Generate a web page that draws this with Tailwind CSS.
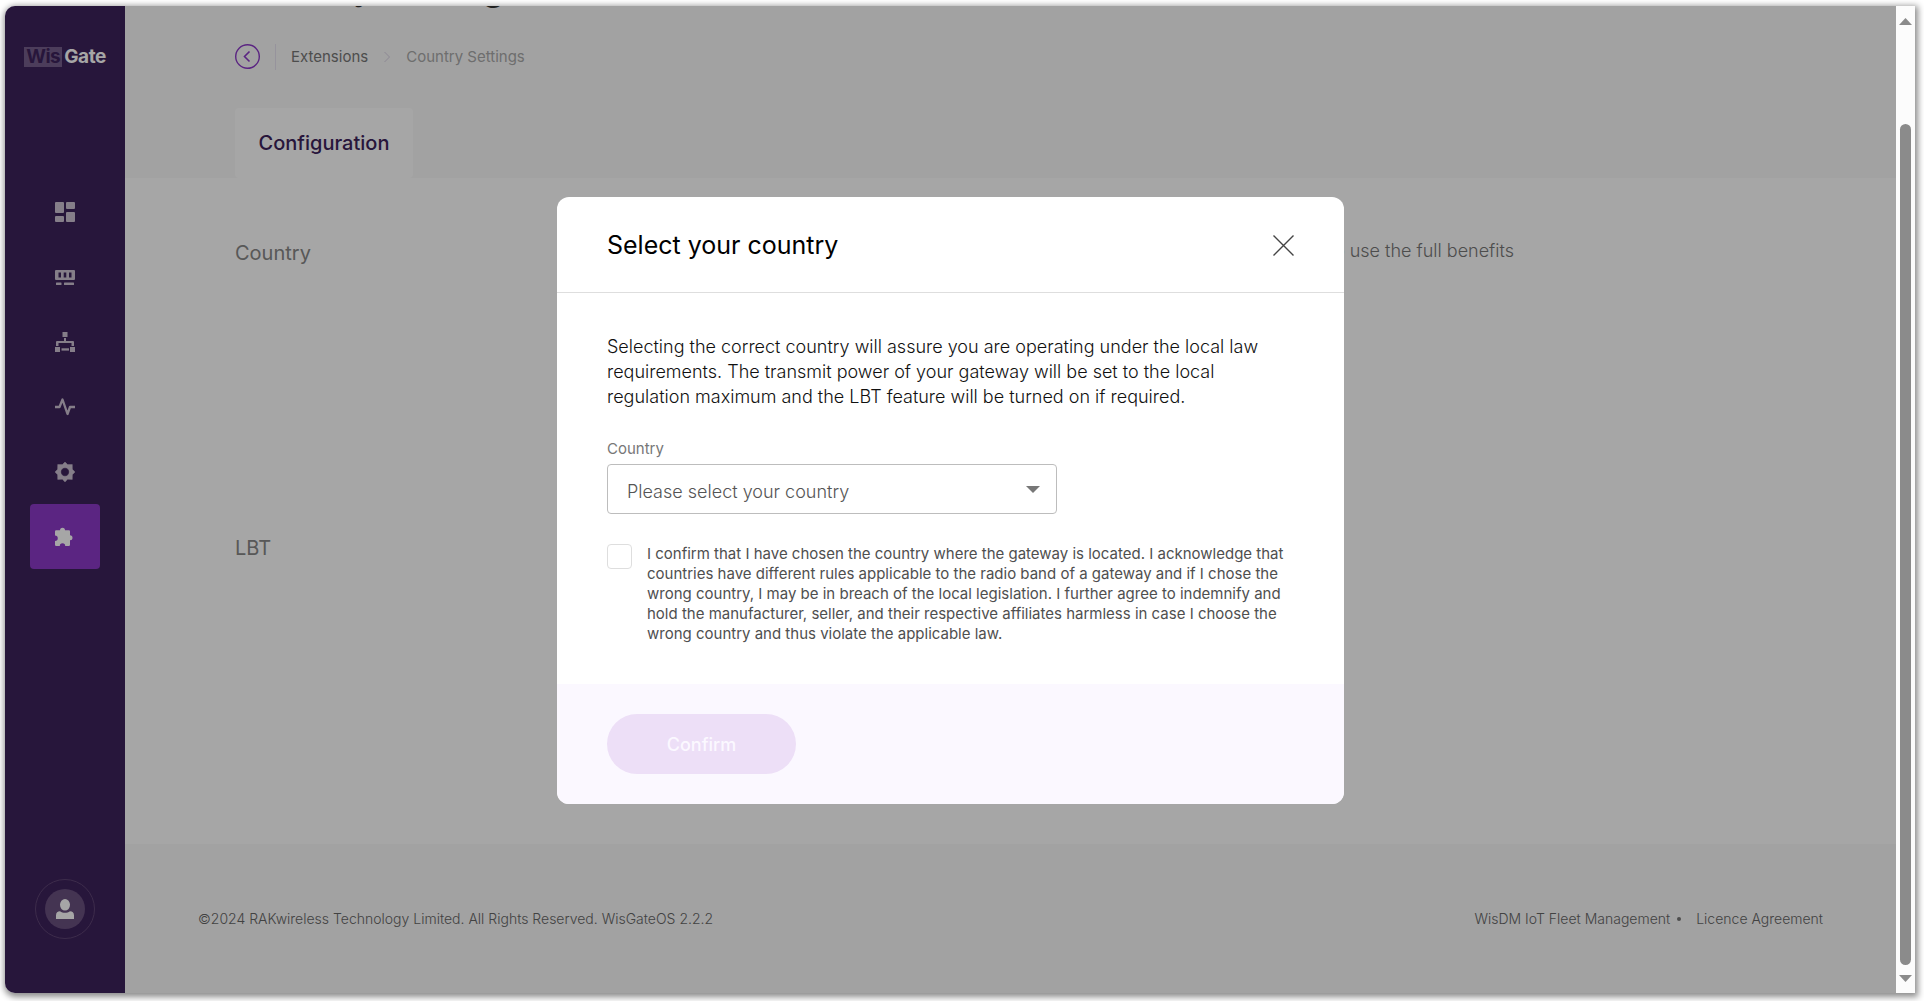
<!DOCTYPE html>
<html lang="en">
<head>
<meta charset="utf-8">
<title>WisGate - Country Settings</title>
<script src="https://cdn.jsdelivr.net/npm/@tailwindcss/browser@4"></script>
</head>
<body class="h-screen bg-white pt-[6px] pr-[9px] pb-[8px] pl-[5px] font-['Inter',sans-serif] overflow-hidden">
<div class="relative flex h-full overflow-hidden rounded-[10px] rounded-r-none bg-[#fcfcfc] shadow-[1px_2px_6px_2px_rgba(0,0,0,0.45)]">

  <!-- Sidebar -->
  <aside class="flex w-[120px] shrink-0 flex-col items-center bg-[#3d225b] pb-[54px]">
    <a href="#" class="mt-[41px] flex h-5 items-center gap-[2px] text-[19px] font-bold leading-5 tracking-tight">
      <span class="bg-[#755f8c] px-[2px] text-[#3d225b]">Wis</span><span class="text-white">Gate</span>
    </a>
    <nav class="mt-[112px] flex flex-col text-[#cdc2d3]">
      <a href="#" aria-label="Dashboard" class="flex h-[65px] w-[70px] items-center justify-center rounded">
        <svg class="size-5" viewBox="0 0 20 20" fill="currentColor"><rect width="9" height="11" rx="1"/><rect x="11" width="9" height="7" rx="1"/><rect y="14" width="9" height="6" rx="1"/><rect x="11" y="10" width="9" height="10" rx="1"/></svg>
      </a>
      <a href="#" aria-label="Gateway" class="flex h-[65px] w-[70px] items-center justify-center rounded">
        <svg class="size-5" viewBox="0 0 20 20" fill="currentColor"><path fill-rule="evenodd" d="M1 3h18a1 1 0 0 1 1 1v8a1 1 0 0 1-1 1H1a1 1 0 0 1-1-1V4a1 1 0 0 1 1-1zM3.500 5.500v5h2.500v-5zM8.700 5.500v5h2.600v-5zM14 5.500v5h2.500v-5z"/><rect x="1" y="15.500" width="5.500" height="2.500" rx=".5"/><rect x="9" y="15.500" width="10" height="2.500" rx=".5"/></svg>
      </a>
      <a href="#" aria-label="Network" class="flex h-[65px] w-[70px] items-center justify-center rounded">
        <svg class="size-5" viewBox="0 0 20 20" fill="currentColor"><rect x="7.500" width="5" height="5"/><rect y="15" width="5" height="5"/><rect x="15" y="15" width="5" height="5"/><rect x="6.500" y="16.300" width="7.500" height="2.300"/><path d="M9 6h2v3h7a1 1 0 0 1 1 1v4h-2.500v-3h-13v3H1v-4a1 1 0 0 1 1-1h7z"/></svg>
      </a>
      <a href="#" aria-label="Diagnostics" class="flex h-[65px] w-[70px] items-center justify-center rounded">
        <svg class="size-5" viewBox="0 0 20 20" fill="none" stroke="currentColor" stroke-width="2.300" stroke-linejoin="round"><path d="M0 10h4.500L7.500 2.500 12.500 17l2.500-7h5"/></svg>
      </a>
      <a href="#" aria-label="Settings" class="flex h-[65px] w-[70px] items-center justify-center rounded">
        <svg class="size-5" viewBox="0 0 20 20"><path fill="currentColor" fill-rule="evenodd" d="M10 0l2.600 2.600 4.700-.100.100 4.800L20 10l-2.600 2.700-.100 4.700-4.700-.100L10 20l-2.600-2.700-4.700.100-.100-4.700L0 10l2.600-2.700.100-4.800 4.700.100zM10 5.800a4.200 4.200 0 1 0 0 8.400 4.200 4.200 0 0 0 0-8.400z" stroke="currentColor" stroke-width=".4" stroke-linejoin="round"/></svg>
      </a>
      <a href="#" aria-label="Extensions" class="flex h-[65px] w-[70px] items-center justify-center rounded bg-[#8c39c8] text-white">
        <svg class="size-5" viewBox="0 0 20 20" fill="currentColor"><path d="M0 4.500Q0 3.300 1.200 3.300H5A2.500 2.500 0 0 1 10 3.300h4Q15 3.300 15 4.500V8.300a2.500 2.500 0 0 1 0 5V17.800Q15 19 13.800 19H10.200a2.700 2.700 0 0 0-5.400 0H1.200Q0 19 0 17.800V14a2.700 2.700 0 0 0 0-5.500z"/></svg>
      </a>
    </nav>
    <button type="button" aria-label="Account" class="mt-auto flex size-[60px] items-center justify-center rounded-full border border-[#5d4474]">
      <span class="flex size-10 items-center justify-center rounded-full bg-[#69507f]">
        <svg class="size-5 text-white" viewBox="0 0 20 20" fill="currentColor"><ellipse cx="10" cy="5.800" rx="5" ry="5.800"/><path d="M1 20v-3.500C1 13.500 2.700 12.200 5 12.200c3 2 7 2 10 0 2.300 0 4 1.300 4 4.300V20z"/></svg>
      </span>
    </button>
  </aside>

  <!-- Page -->
  <div class="flex min-w-0 flex-1 flex-col bg-white">
    <header class="flex h-[172px] shrink-0 flex-col bg-[#f9f9f9] pl-[110px]">
      <h1 class="-mt-[43px] h-[81px] text-[36px] font-medium leading-[48px] text-[#333]">Country Settings</h1>
      <nav aria-label="Breadcrumb" class="flex h-[26px] shrink-0 items-center text-[15px] leading-5">
        <a href="#" aria-label="Back" class="mr-[14px] text-[#8c39c8]">
          <svg class="size-[26px]" viewBox="0 0 26 26" fill="none" stroke="currentColor" stroke-width="1.400"><circle cx="12.500" cy="12.500" r="11.800"/><path d="M14.500 7.500l-5 5 5 5" stroke-width="1.600"/></svg>
        </a>
        <span class="h-full w-px bg-[#e7e2f0]"></span>
        <a href="#" class="ml-[15px] text-[#777]">Extensions</a>
        <svg class="mx-4 h-3 w-[6px] text-[#d8d0e2]" viewBox="0 0 6 12" fill="none" stroke="currentColor"><path d="M.5 1l5 5-5 5"/></svg>
        <span class="text-[#a9a9a9]">Country Settings</span>
      </nav>
      <a href="#" class="mt-auto flex h-[70px] w-[178px] items-center justify-center rounded bg-white text-[20px] font-medium leading-6 text-[#3d225b]">Configuration</a>
    </header>

    <main class="flex-1 pl-[110px] pr-[382px] pt-[61px] text-[#878787]">
      <section class="flex h-[295px] items-start justify-between">
        <h2 class="text-[20px] leading-7">Country</h2>
        <p class="text-[18px] font-light leading-6 text-[#777]">to use the full benefits</p>
      </section>
      <section>
        <h2 class="text-[20px] leading-7">LBT</h2>
      </section>
    </main>

    <footer class="flex h-[149px] shrink-0 items-center justify-between bg-[#f9f9f9] px-[73px] text-[14px] font-light leading-5 text-[#666]">
      <p>©2024 RAKwireless Technology Limited. All Rights Reserved. WisGateOS 2.2.2</p>
      <div class="flex items-center">
        <a href="#">WisDM IoT Fleet Management</a>
        <span class="mr-[15px] ml-[7px] size-1 rounded-full bg-[#777]"></span>
        <a href="#">Licence Agreement</a>
      </div>
    </footer>
  </div>

  <!-- Scrollbar -->
  <div class="relative z-10 flex w-[19px] shrink-0 flex-col items-center bg-[#fcfcfc] pt-3 pb-[11px] text-[#8b8b8b]">
    <svg class="h-[7px] w-[13px]" viewBox="0 0 13 7" fill="currentColor"><path d="M6.500 0L13 7H0z"/></svg>
    <span class="mt-[99px] mb-[10px] w-[11px] flex-1 rounded-full bg-current"></span>
    <svg class="h-[7px] w-[13px]" viewBox="0 0 13 7" fill="currentColor"><path d="M0 0h13L6.500 7z"/></svg>
  </div>

  <!-- Modal -->
  <div class="absolute inset-y-0 left-0 right-[19px] flex items-center justify-center bg-black/35 pt-[2px]">
    <div role="dialog" aria-labelledby="dlg-title" class="w-[787px] overflow-hidden rounded-xl bg-white">
      <div class="flex h-24 items-center justify-between border-b border-[#dedede] px-[50px]">
        <h2 id="dlg-title" class="text-[25px] leading-8 text-black">Select your country</h2>
        <button type="button" aria-label="Close" class="pt-[2px] text-[#444]">
          <svg class="size-[21px]" viewBox="0 0 21 21" fill="none" stroke="currentColor" stroke-width="1.400"><path d="M.5.500l20 20M20.500.500l-20 20"/></svg>
        </button>
      </div>
      <form id="country-form" class="px-[50px] pt-[41px] pb-10">
        <p class="text-[18px] font-light leading-[25px] text-[#111]">Selecting the correct country will assure you are operating under the local law requirements. The transmit power of your gateway will be set to the local regulation maximum and the LBT feature will be turned on if required.</p>
        <label for="country" class="mt-[30px] block text-[15px] leading-5 text-[#777]">Country</label>
        <div class="relative mt-[5px] w-[450px]">
          <select id="country" class="block h-[50px] w-full appearance-none rounded border border-[#bdbdbd] bg-white pt-1 pl-[19px] text-[18px] font-light text-[#555]">
            <option>Please select your country</option>
          </select>
          <svg class="pointer-events-none absolute top-[22px] right-[17px] h-[7px] w-[14px] text-[#777]" viewBox="0 0 14 7" fill="currentColor"><path d="M0 0h14L7 7z"/></svg>
        </div>
        <div class="mt-[30px] flex items-start gap-[15px]">
          <input id="agree" type="checkbox" class="size-[25px] shrink-0 appearance-none rounded border border-[#dedede] bg-white">
          <label for="agree" class="text-[15px] leading-5 text-[#4f4f4f]">I confirm that I have chosen the country where the gateway is located. I acknowledge that countries have different rules applicable to the radio band of a gateway and if I chose the wrong country, I may be in breach of the local legislation. I further agree to indemnify and hold the manufacturer, seller, and their respective affiliates harmless in case I choose the wrong country and thus violate the applicable law.</label>
        </div>
      </form>
      <div class="bg-[#fbf8ff] px-[50px] py-[30px]">
        <button type="submit" form="country-form" disabled class="h-[60px] w-[189px] rounded-full bg-[#eddff7] text-[18px] font-medium text-[#fbf8ff]">Confirm</button>
      </div>
    </div>
  </div>
</div>
</body>
</html>
